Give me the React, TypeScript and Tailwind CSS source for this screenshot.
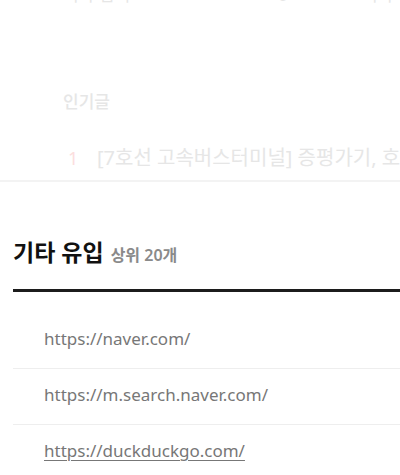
const font = { fontFamily: '"Noto Sans", "Noto Sans CJK KR", sans-serif' }

const referrers = [
  { url: 'https://naver.com/', underline: false },
  { url: 'https://m.search.naver.com/', underline: false },
  { url: 'https://duckduckgo.com/', underline: true },
]

function FadedBackground() {
  return (
    <div className="h-[182px] border-b-2 border-[#f3f3f3] overflow-hidden text-[#e6e6e6]">
      <div className="-mt-[17px] flex items-center h-[24px] text-[17px] whitespace-nowrap">
        <span className="pl-[63px] w-[278px] shrink-0">기타 검색</span>
        <span className="w-[84px] shrink-0">0</span>
        <span>기타</span>
      </div>
      <div className="pl-[63px] mt-[83px] text-[17px] font-medium leading-[24px]">인기글</div>
      <div className="flex items-center mt-[29px] h-[30px] whitespace-nowrap">
        <span className="pl-[68px] w-[97px] shrink-0 text-[18px] text-[#fcdede]">1</span>
        <span className="text-[20px]">[7호선 고속버스터미널] 증평가기, 호남선</span>
      </div>
    </div>
  )
}

export default function App() {
  return (
    <div className="w-[400px] h-[475px] bg-white overflow-hidden" style={font}>
      <FadedBackground />
      <div className="pl-[13px]">
        <div className="flex items-baseline gap-[7px] mt-[55px] h-[30px]">
          <h2 className="text-[23px] font-bold text-[#111] leading-[30px]">기타 유입</h2>
          <span className="text-[16px] font-semibold text-[#8a8a8a]">상위 20개</span>
        </div>
        <div className="mt-[22px] h-[3px] bg-[#1c1c1c]" />
        <ul className="pt-[21px]">
          {referrers.map((r) => (
            <li key={r.url} className="h-[56px] pb-[3px] flex items-center border-b border-[#eeeeee] pl-[31px]">
              <span className={`text-[17px] text-[#777] ${r.underline ? 'underline underline-offset-[3px]' : ''}`}>
                {r.url}
              </span>
            </li>
          ))}
        </ul>
      </div>
    </div>
  )
}
